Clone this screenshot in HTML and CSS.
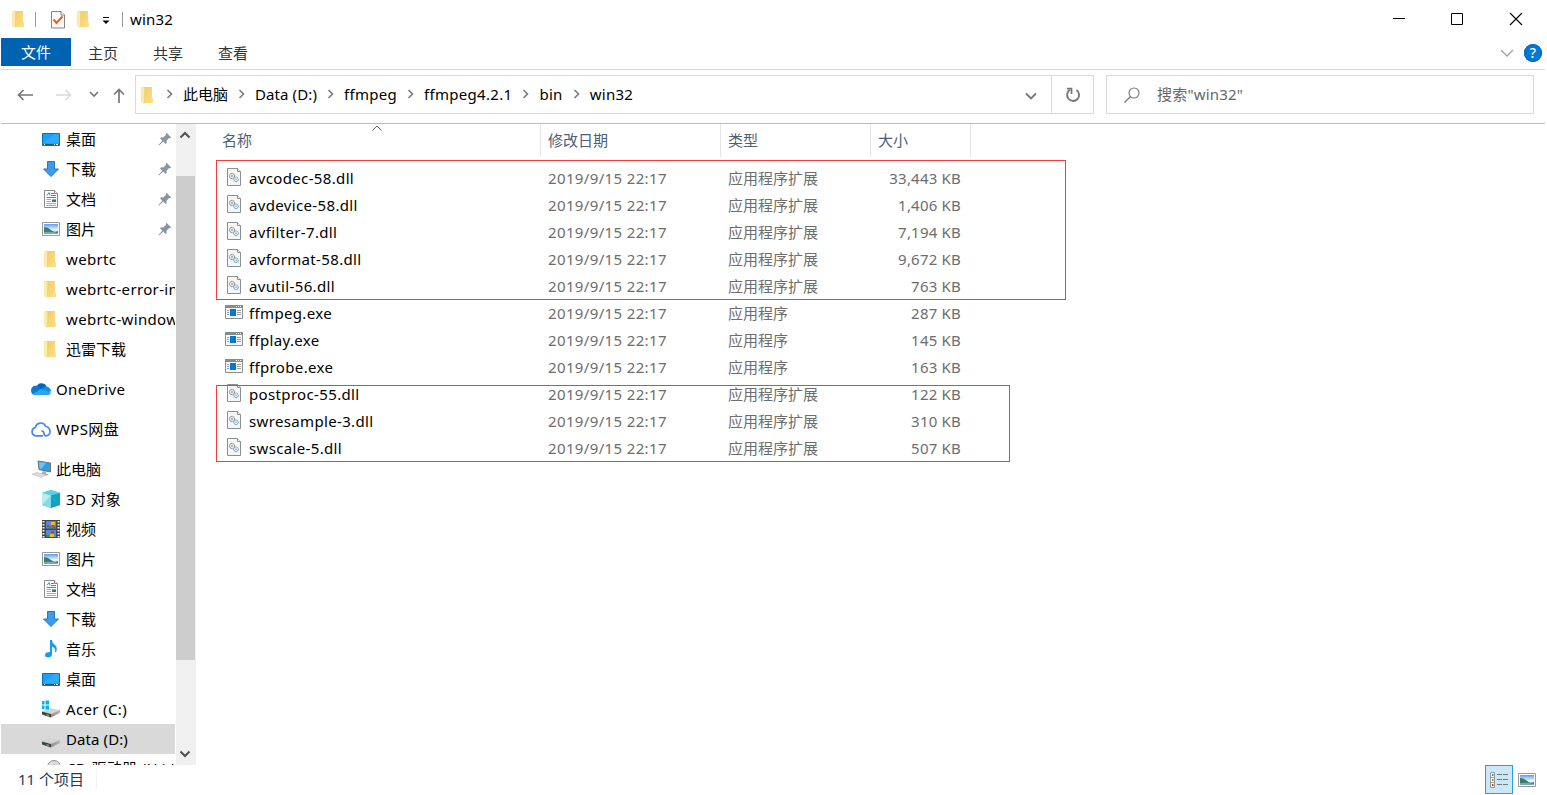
FILE: index.html
```html
<!DOCTYPE html>
<html lang="zh-CN">
<head>
    <meta charset="UTF-8">
    <meta name="viewport" content="width=device-width, initial-scale=1.0">
    <title>win32</title>
    <link rel="stylesheet" href="styles.css">
</head>
<body>
    <!-- Icon definitions -->
    <svg class="defs" width="0" height="0">
        <defs>
            <linearGradient id="g-folder" x1="0" y1="0" x2="1" y2="1">
                <stop offset="0" stop-color="#f0ca66"/>
                <stop offset="1" stop-color="#ffe08a"/>
            </linearGradient>
            <linearGradient id="g-sky" x1="0" y1="0" x2="0" y2="1">
                <stop offset="0" stop-color="#5a9cf0"/>
                <stop offset="0.55" stop-color="#e4f5fb"/>
                <stop offset="1" stop-color="#b9dcea"/>
            </linearGradient>
            <linearGradient id="g-drive" x1="0" y1="0" x2="1" y2="0">
                <stop offset="0" stop-color="#8e8e8e"/>
                <stop offset="1" stop-color="#b8b8b8"/>
            </linearGradient>
        </defs>
        <symbol id="i-folder" viewBox="0 0 18 18">
            <path d="M4 1h9v11.500h1V17H4z" fill="url(#g-folder)"/>
            <path d="M2 1h2l2 2v14l-1 1-3-2z" fill="#ffe9a6"/>
            <path d="M5.500 3v14" stroke="#f0d070" stroke-width=".8"/>
        </symbol>
        <symbol id="i-desktop" viewBox="0 0 18 18">
            <path d="M.5 3.500h17v12H.5z" fill="#18a0fb" stroke="#0b6fae"/>
            <path d="M1 13L13 4h4v9z" fill="#3cb0ff" opacity=".6"/>
            <path d="M1 14.500h16" stroke="#075c94"/>
            <path d="M2 14.500h1M12 14.500h1M14 14.500h2" stroke="#fff"/>
        </symbol>
        <symbol id="i-download" viewBox="0 0 18 18">
            <path d="M5.500 1.500h7V9h4L9 16.500 1.500 9h4z" fill="#3b9cea" stroke="#2579bd"/>
        </symbol>
        <symbol id="i-doc" viewBox="0 0 18 18">
            <path d="M2.500.5h10l3 3v14h-13z" fill="#fff" stroke="#8b8b8b"/>
            <path d="M12.500.5v3h3" fill="#eee" stroke="#8b8b8b"/>
            <path d="M5 5.500l2-3 1 3M9 3.500h3M9 5.500h5M4.500 7.500H14" stroke="#3290d2" fill="none"/>
            <path d="M4.500 9.500H9M4.500 11.500H9M4.500 13.500H14M4.500 15.500H14" stroke="#a4a8ac"/>
            <path d="M10 9h4v3h-4z" fill="#2d7a8c"/>
            <path d="M10 9h4v1h-4z" fill="#64b5ed"/>
        </symbol>
        <symbol id="i-picture" viewBox="0 0 18 18">
            <path d="M.5 2.500h17v13H.5z" fill="#fff" stroke="#999"/>
            <path d="M2 4h14v10H2z" fill="url(#g-sky)"/>
            <path d="M2 7q4 0 7 3t7 1v3H2z" fill="#397b6d"/>
            <path d="M2 12q7-1 14 1v1H2z" fill="#7ba7bd"/>
        </symbol>
        <symbol id="i-onedrive" viewBox="0 0 20 18">
            <path d="M5.500 7a5.500 5.500 0 0 1 10-1L12 12 3 9z" fill="#0364b8"/>
            <path d="M.2 11.500A4.700 4.700 0 0 1 6 5.800l9 6.200-8 3H4a4 4 0 0 1-3.800-3.500z" fill="#0a78d4"/>
            <path d="M10 9.500l3-2.500q1.500-1.500 4 0 3 1.500 3 4.500l-5 1z" fill="#1490df"/>
            <path d="M1.500 14l8.500-5 10 3.500Q19.500 15 17 15H4.500Q2.500 15 1.500 14z" fill="#28a8ea"/>
        </symbol>
        <symbol id="i-wps" viewBox="0 0 20 18">
            <path d="M11.500 15.800H5a4.200 4.200 0 0 1-.6-8.300 5.400 5.400 0 0 1 10.300-1.200c5.800 1.600 5.600 9.500.3 9.500-3.500 0-.5-4.800-4-4.800" fill="none" stroke="#4a86f0" stroke-width="1.700" stroke-linecap="round"/>
        </symbol>
        <symbol id="i-pc" viewBox="0 0 20 18">
            <path d="M7 1l12.500 2v9L8 9.500z" fill="#2e9fe6" stroke="#6d7478"/>
            <path d="M8 2l7 1-5 6-1.500-.5z" fill="#6cc5f7"/>
            <path d="M12 11l3 .6v2l3 .8-2 1-6-1.500z" fill="#a9adb0"/>
            <path d="M1 14l5-1.500L15.500 15 10 17.500z" fill="#d9dcde" stroke="#b9bdc0" stroke-width=".6"/>
        </symbol>
        <symbol id="i-cube" viewBox="0 0 18 18">
            <path d="M9 0l9 3v12l-9 3-9-3V3z" fill="#20b5cf"/>
            <path d="M0 3l9 2.500V18l-9-3z" fill="#7fdbe6"/>
            <path d="M0 3l9-3 9 3-9 2.500z" fill="#5fd0e0"/>
            <path d="M0 3l9 2.500L0 15z" fill="#b8edf1"/>
            <path d="M9 5.500L18 3v12z" fill="#0fa3c4"/>
            <path d="M9 7v11l9-3z" fill="#1292b3" opacity=".6"/>
        </symbol>
        <symbol id="i-video" viewBox="0 0 18 18">
            <path d="M0 0h18v18H0z" fill="#4a4544"/>
            <path d="M1.500 1v17M16.500 1v17" stroke="#eee" stroke-width="2" stroke-dasharray="1.500 1.500"/>
            <path d="M4 1h10v7.500H4zM4 10h10v7H4z" fill="#5488d8"/>
            <path d="M9 2h4v3H9zM8 14h4v3H8z" fill="#e8c020"/>
            <path d="M10 5h2v2h-2zM5 5h2v2H5zM9 11h3v2H9z" fill="#d2322d"/>
            <path d="M7 6.500h2v2H7zM11 7h3v1.500h-3zM4 15h3v2H4z" fill="#368c37"/>
        </symbol>
        <symbol id="i-music" viewBox="0 0 18 18">
            <path d="M8 0h2q0 3 3 5 3 2.500 1 7.500l-1-.5q1-4-3-5.500V14q0 3-3.500 3.500Q3 17.500 3 15q0-3 5-3z" fill="#149cf2"/>
        </symbol>
        <symbol id="i-drive" viewBox="0 0 18 18">
            <path d="M0 11.500L7 8l11 2L9 14z" fill="#d4d4d4"/>
            <path d="M9 14l9-4v3l-9 4.500z" fill="url(#g-drive)"/>
            <path d="M0 11.500L9 14v3.500L0 14.500z" fill="#444"/>
            <path d="M4.500 14.700l2.500.7" stroke="#5be06c"/>
        </symbol>
        <symbol id="i-drive-win" viewBox="0 0 18 18">
            <use href="#i-drive"/>
            <path d="M-1 1h3.500v3.500H-1zM3.500.5H7v4H3.500zM-1 5.500h3.500V9H-1zM3.500 5.500H7v4H3.500z" fill="#00b4f0"/>
        </symbol>
        <symbol id="i-disc" viewBox="0 0 18 18">
            <circle cx="12" cy="7" r="6.500" fill="#dcdcdc" stroke="#8f8f8f"/>
            <circle cx="12" cy="7" r="2" fill="#fff" stroke="#999"/>
        </symbol>
        <symbol id="i-pin" viewBox="0 0 14 14">
            <path d="M8.500.8l4.700 4.700-1.200.7-.8-.2L8.500 8.700l.2 2.300-1 1L5.300 9.600 1 13.500l-.6-.6 4-4.200L2 6.300l1-1 2.300.2L8 2.800l-.2-.9z" fill="#8795a1"/>
        </symbol>
        <symbol id="i-dll" viewBox="0 0 16 18">
            <path d="M1.500.5h10l3 3v14h-13z" fill="#f6f6f6" stroke="#8b8f92"/>
            <path d="M11.500.5v3h3" fill="#fff" stroke="#8b8f92"/>
            <circle cx="6" cy="8" r="2.600" fill="#fff" stroke="#6d757b" stroke-dasharray="1.400 .4"/>
            <circle cx="6" cy="8" r="1" fill="none" stroke="#7b8389" stroke-width=".7"/>
            <circle cx="10" cy="11.300" r="2.300" fill="#e6f2f9" stroke="#6295ba" stroke-dasharray="1.400 .4"/>
            <circle cx="10" cy="11.300" r=".7" fill="#6e9fc0"/>
        </symbol>
        <symbol id="i-exe" viewBox="0 0 18 14">
            <path d="M.5.5h17v13H.5z" fill="#f8f8f8" stroke="#8b9094"/>
            <path d="M0 0h18v3H0z" fill="#858c90"/>
            <path d="M11 1.500h1M13 1.500h1M15 1.500h1" stroke="#fff"/>
            <path d="M5 4h6v7H5z" fill="#0078d7"/>
            <path d="M2 5.500h2M2 7.500h2M2 9.500h2M12 5.500h4M12 7.500h4M12 9.500h4" stroke="#999fa3"/>
        </symbol>
        <symbol id="i-crumb" viewBox="0 0 8 10">
            <path d="M1.500 1l4 4-4 4" fill="none" stroke="#7a7a7a" stroke-width="1.600"/>
        </symbol>
    </svg>

    <div class="window">
        <!-- Title bar -->
        <div class="titlebar">
            <svg class="icon"><use href="#i-folder"/></svg>
            <span class="divider"></span>
            <svg class="props" width="16" height="19" viewBox="0 0 16 19">
                <path d="M1.500 1.500h9.500l3.500 3.500v13h-13z" fill="#fafafa" stroke="#858585"/>
                <path d="M11 1.500V5h3.500" fill="#fff" stroke="#858585"/>
                <path d="M3.500 9.500l3 3.500 6-6.500" fill="none" stroke="#ee5a24" stroke-width="2"/>
            </svg>
            <svg class="icon"><use href="#i-folder"/></svg>
            <svg class="customize" width="8" height="8" viewBox="0 0 8 8">
                <path d="M1 .5h6" stroke="#000"/>
                <path d="M.5 3.500h7L4 7z" fill="#000"/>
            </svg>
            <span class="divider"></span>
            <span class="title">win32</span>
            <div class="controls">
                <svg width="14" height="14" viewBox="0 0 14 14"><path d="M1 6.500h12" stroke="#000"/></svg>
                <svg width="14" height="14" viewBox="0 0 14 14"><path d="M1.500 1.500h11v11h-11z" fill="none" stroke="#000"/></svg>
                <svg class="close" width="14" height="14" viewBox="0 0 14 14"><path d="M1 1l12 12M13 1L1 13" stroke="#000" stroke-width="1.100"/></svg>
            </div>
        </div>

        <!-- Ribbon tabs -->
        <div class="tabs">
            <span class="tab active">文件</span>
            <span class="tab">主页</span>
            <span class="tab">共享</span>
            <span class="tab">查看</span>
            <svg class="expand" width="14" height="8" viewBox="0 0 14 8"><path d="M1 1l6 6 6-6" fill="none" stroke="#a0a0a0" stroke-width="1.300"/></svg>
            <span class="help">?</span>
        </div>

        <!-- Navigation -->
        <div class="nav">
            <div class="nav-buttons">
                <svg width="16" height="12" viewBox="0 0 16 12"><path d="M16 6H1.500M6.500 1l-5 5 5 5" fill="none" stroke="#777" stroke-width="1.700"/></svg>
                <svg class="forward" width="16" height="12" viewBox="0 0 16 12"><path d="M0 6h14.500M9.500 1l5 5-5 5" fill="none" stroke="#d9d9d9" stroke-width="1.500"/></svg>
                <svg class="recent" width="10" height="7" viewBox="0 0 10 7"><path d="M1 1l4 4 4-4" fill="none" stroke="#777" stroke-width="1.600"/></svg>
                <svg class="up" width="12" height="15" viewBox="0 0 12 15"><path d="M6 15V1.500M1 6.500l5-5 5 5" fill="none" stroke="#777" stroke-width="1.700"/></svg>
            </div>
            <div class="address">
                <svg class="icon"><use href="#i-folder"/></svg>
                <svg class="crumb-sep first"><use href="#i-crumb"/></svg>
                <span class="cjk">此电脑</span>
                <svg class="crumb-sep"><use href="#i-crumb"/></svg>
                <span class="drive">Data (D:)</span>
                <svg class="crumb-sep"><use href="#i-crumb"/></svg>
                <span>ffmpeg</span>
                <svg class="crumb-sep"><use href="#i-crumb"/></svg>
                <span>ffmpeg4.2.1</span>
                <svg class="crumb-sep"><use href="#i-crumb"/></svg>
                <span>bin</span>
                <svg class="crumb-sep"><use href="#i-crumb"/></svg>
                <span>win32</span>
                <svg class="history" width="12" height="8" viewBox="0 0 12 8"><path d="M1 1.500l5 5 5-5" fill="none" stroke="#777" stroke-width="1.900"/></svg>
                <div class="refresh">
                    <svg width="16" height="16" viewBox="0 0 16 16">
                        <path d="M5 2.800A6 6 0 1 0 11.500 3" fill="none" stroke="#777" stroke-width="1.900"/>
                        <path d="M2 1.700h4.500V7" fill="none" stroke="#777" stroke-width="1.700"/>
                    </svg>
                </div>
            </div>
            <div class="search">
                <svg width="16" height="16" viewBox="0 0 16 16">
                    <circle cx="10" cy="6" r="5" fill="none" stroke="#777" stroke-width="1.100"/>
                    <path d="M6.500 9.500L.5 15.500" stroke="#777" stroke-width="1.200"/>
                </svg>
                <span>搜索"win32"</span>
            </div>
        </div>

        <div class="main">
            <!-- Navigation pane -->
            <div class="sidebar">
                <div class="item"><svg class="icon"><use href="#i-desktop"/></svg><span class="cjk">桌面</span><svg class="pin"><use href="#i-pin"/></svg></div>
                <div class="item"><svg class="icon"><use href="#i-download"/></svg><span class="cjk">下载</span><svg class="pin"><use href="#i-pin"/></svg></div>
                <div class="item"><svg class="icon"><use href="#i-doc"/></svg><span class="cjk">文档</span><svg class="pin"><use href="#i-pin"/></svg></div>
                <div class="item"><svg class="icon"><use href="#i-picture"/></svg><span class="cjk">图片</span><svg class="pin"><use href="#i-pin"/></svg></div>
                <div class="item"><svg class="icon"><use href="#i-folder"/></svg><span>webrtc</span></div>
                <div class="item"><svg class="icon"><use href="#i-folder"/></svg><span>webrtc-error-info</span></div>
                <div class="item"><svg class="icon"><use href="#i-folder"/></svg><span>webrtc-windows</span></div>
                <div class="item"><svg class="icon"><use href="#i-folder"/></svg><span class="cjk">迅雷下载</span></div>
                <div class="item root"><svg class="icon"><use href="#i-onedrive"/></svg><span>OneDrive</span></div>
                <div class="item root"><svg class="icon"><use href="#i-wps"/></svg><span>WPS网盘</span></div>
                <div class="item root"><svg class="icon"><use href="#i-pc"/></svg><span class="cjk">此电脑</span></div>
                <div class="item"><svg class="icon"><use href="#i-cube"/></svg><span>3D 对象</span></div>
                <div class="item"><svg class="icon"><use href="#i-video"/></svg><span class="cjk">视频</span></div>
                <div class="item"><svg class="icon"><use href="#i-picture"/></svg><span class="cjk">图片</span></div>
                <div class="item"><svg class="icon"><use href="#i-doc"/></svg><span class="cjk">文档</span></div>
                <div class="item"><svg class="icon"><use href="#i-download"/></svg><span class="cjk">下载</span></div>
                <div class="item"><svg class="icon"><use href="#i-music"/></svg><span class="cjk">音乐</span></div>
                <div class="item"><svg class="icon"><use href="#i-desktop"/></svg><span class="cjk">桌面</span></div>
                <div class="item"><svg class="icon"><use href="#i-drive-win"/></svg><span>Acer (C:)</span></div>
                <div class="item selected"><svg class="icon"><use href="#i-drive"/></svg><span>Data (D:)</span></div>
                <div class="item last"><svg class="icon"><use href="#i-disc"/></svg><span>CD 驱动器 (H:) W</span></div>
            </div>
            <div class="scrollbar">
                <svg width="12" height="8" viewBox="0 0 12 8"><path d="M1.500 6.500L6 2l4.500 4.500" fill="none" stroke="#505050" stroke-width="2"/></svg>
                <div class="thumb"></div>
                <svg width="12" height="8" viewBox="0 0 12 8"><path d="M1.500 1.500L6 6l4.500-4.500" fill="none" stroke="#505050" stroke-width="2"/></svg>
            </div>

            <!-- File list -->
            <div class="files">
                <div class="header">
                    <span class="name">名称</span>
                    <span>修改日期</span>
                    <span>类型</span>
                    <span>大小</span>
                    <svg class="sort" width="10" height="6" viewBox="0 0 10 6"><path d="M.5 5.500L5 1l4.500 4.500" fill="none" stroke="#666"/></svg>
                </div>
                <div class="row"><svg class="dll"><use href="#i-dll"/></svg><span class="name">avcodec-58.dll</span><span class="date">2019/9/15 22:17</span><span>应用程序扩展</span><span class="size">33,443 KB</span></div>
                <div class="row"><svg class="dll"><use href="#i-dll"/></svg><span class="name">avdevice-58.dll</span><span class="date">2019/9/15 22:17</span><span>应用程序扩展</span><span class="size">1,406 KB</span></div>
                <div class="row"><svg class="dll"><use href="#i-dll"/></svg><span class="name">avfilter-7.dll</span><span class="date">2019/9/15 22:17</span><span>应用程序扩展</span><span class="size">7,194 KB</span></div>
                <div class="row"><svg class="dll"><use href="#i-dll"/></svg><span class="name">avformat-58.dll</span><span class="date">2019/9/15 22:17</span><span>应用程序扩展</span><span class="size">9,672 KB</span></div>
                <div class="row"><svg class="dll"><use href="#i-dll"/></svg><span class="name">avutil-56.dll</span><span class="date">2019/9/15 22:17</span><span>应用程序扩展</span><span class="size">763 KB</span></div>
                <div class="row"><svg class="exe"><use href="#i-exe"/></svg><span class="name">ffmpeg.exe</span><span class="date">2019/9/15 22:17</span><span>应用程序</span><span class="size">287 KB</span></div>
                <div class="row"><svg class="exe"><use href="#i-exe"/></svg><span class="name">ffplay.exe</span><span class="date">2019/9/15 22:17</span><span>应用程序</span><span class="size">145 KB</span></div>
                <div class="row"><svg class="exe"><use href="#i-exe"/></svg><span class="name">ffprobe.exe</span><span class="date">2019/9/15 22:17</span><span>应用程序</span><span class="size">163 KB</span></div>
                <div class="row"><svg class="dll"><use href="#i-dll"/></svg><span class="name">postproc-55.dll</span><span class="date">2019/9/15 22:17</span><span>应用程序扩展</span><span class="size">122 KB</span></div>
                <div class="row"><svg class="dll"><use href="#i-dll"/></svg><span class="name">swresample-3.dll</span><span class="date">2019/9/15 22:17</span><span>应用程序扩展</span><span class="size">310 KB</span></div>
                <div class="row"><svg class="dll"><use href="#i-dll"/></svg><span class="name">swscale-5.dll</span><span class="date">2019/9/15 22:17</span><span>应用程序扩展</span><span class="size">507 KB</span></div>
                <!-- Red highlight boxes over the dll files -->
                <div class="mark mark-top"></div>
                <div class="mark mark-bottom"></div>
            </div>
        </div>

        <!-- Status bar -->
        <div class="status">
            <span class="count">11 个项目</span>
            <div class="view active">
                <svg width="20" height="18" viewBox="0 0 20 18">
                    <path d="M1.500 1.500h4v15h-4zM1.500 6.500h4M1.500 11.500h4" fill="#fff" stroke="#999"/>
                    <path d="M3 4h1.500" stroke="#2f86bd" stroke-width="2"/>
                    <path d="M3 9h1.500" stroke="#8a8a20" stroke-width="2"/>
                    <path d="M3 14h1.500" stroke="#d03a20" stroke-width="2"/>
                    <path d="M8 3.500h5M14 3.500h5M8 8.500h5M14 8.500h5M8 13.500h5M14 13.500h5" stroke="#777"/>
                </svg>
            </div>
            <div class="view"><svg class="icon"><use href="#i-picture"/></svg></div>
        </div>
    </div>
</body>
</html>
```
FILE: styles.css
```css
*, *::before, *::after {
    box-sizing: border-box;
    margin: 0;
    padding: 0;
}

body {
    font-family: "Noto Sans", "Noto Sans CJK SC", sans-serif;
    font-size: 15px;
    line-height: 20px;
    background-color: #fff;
    color: #000;
    overflow: hidden;
}

svg {
    display: block;
    flex-shrink: 0;
}

span {
    white-space: nowrap;
}

.defs {
    position: absolute;
}

.window {
    width: 1547px;
    height: 795px;
    padding: 0 2px 0 1px;
    display: flex;
    flex-direction: column;
}

.icon {
    width: 18px;
    height: 18px;
    overflow: visible;
}

/* Title bar */
.titlebar {
    height: 38px;
    padding-left: 9px;
    display: flex;
    align-items: center;
}

.divider {
    width: 1px;
    height: 15px;
    background-color: #999;
}

.titlebar .icon + .divider {
    margin-left: 7px;
}

.props {
    margin: 0 9px 0 14px;
}

.customize {
    margin: 3px 12px 0 9px;
}

.title {
    margin-left: 7px;
    letter-spacing: 0.2px;
}

.controls {
    display: flex;
    gap: 44px;
    margin-left: auto;
    margin-right: 22px;
}

.close {
    margin-left: 1px;
}

/* Ribbon tabs */
.tabs {
    height: 32px;
    display: flex;
    border-bottom: 1px solid #dadada;
    color: #333;
}

.tab {
    width: 65px;
    padding: 5px 1px 0 0;
    text-align: center;
}

.tab.active {
    width: 70px;
    height: 28px;
    padding: 4px 0 0;
    background-color: #0063b1;
    color: #fff;
}

.expand {
    margin: 11px 10px 0 auto;
}

.help {
    width: 18px;
    height: 18px;
    margin: 6px 3px 0 0;
    border-radius: 50%;
    background-color: #0078d7;
    box-shadow: inset 0 0 0 1px #0a65ad;
    color: #fff;
    font-size: 14px;
    font-weight: 500;
    line-height: 18px;
    text-align: center;
}

/* Navigation */
.nav {
    height: 54px;
    display: flex;
    align-items: center;
    border-bottom: 1px solid #bcbcbc;
    padding: 0 11px 4px 0;
}

.nav-buttons {
    width: 134px;
    padding-left: 16px;
    display: flex;
    align-items: center;
}

.forward {
    margin-left: 23px;
}

.recent {
    margin-left: 17px;
}

.up {
    margin: 2px 0 0 14px;
}

.address, .search {
    height: 39px;
    display: flex;
    align-items: center;
    border: 1px solid #d9d9d9;
}

.address {
    width: 959px;
    padding-left: 3px;
}

.address span {
    letter-spacing: 0.3px;
}

.address span, .search span {
    padding-bottom: 2px;
}

.address .cjk {
    letter-spacing: 0;
}

.address .drive {
    letter-spacing: 0.1px;
}

.crumb-sep {
    width: 8px;
    height: 10px;
    margin: 0 9px 2px 10px;
}

.crumb-sep.first {
    margin-left: 9px;
}

.history {
    margin: 2px 14px 0 auto;
}

.refresh {
    width: 42px;
    height: 37px;
    display: flex;
    align-items: center;
    justify-content: center;
    border-left: 1px solid #d9d9d9;
}

.search {
    width: 428px;
    margin-left: 12px;
    padding-left: 17px;
    gap: 17px;
    color: #666;
    letter-spacing: 0.2px;
}

.main {
    height: 641px;
    display: flex;
}

/* Navigation pane */
.sidebar {
    width: 174px;
    overflow: hidden;
}

.item {
    height: 30px;
    padding: 0 3px 0 41px;
    display: flex;
    align-items: center;
    gap: 6px;
}

.item span {
    flex-shrink: 0;
    letter-spacing: 0.35px;
}

.item .cjk {
    letter-spacing: 0;
}

.item.root {
    margin-top: 10px;
    padding-left: 30px;
    gap: 5px;
}

.item.root .icon {
    width: 20px;
}

.item.selected {
    background-color: #d9d9d9;
}

.item.selected span {
    letter-spacing: 0.1px;
}

.item.last span {
    margin-bottom: 3px;
}

.pin {
    width: 14px;
    height: 14px;
    margin-left: auto;
}

.scrollbar {
    width: 20px;
    margin-left: 1px;
    padding: 7px 1px 7px 0;
    display: flex;
    flex-direction: column;
    align-items: center;
    background-color: #f0f0f0;
}

.scrollbar svg {
    margin-right: 1px;
}

.thumb {
    width: 19px;
    height: 484px;
    margin: 37px 0 auto;
    background-color: #cdcdcd;
}

/* File list */
.files {
    position: relative;
    flex: 1;
    padding-left: 18px;
}

.header {
    position: relative;
    height: 33px;
    margin-bottom: 8px;
    display: grid;
    grid-template-columns: 327px 180px 150px 100px;
    color: #4c607a;
}

.header span {
    padding: 6px 0 0 7px;
    border-right: 1px solid #e5e5e5;
}

.header .name {
    padding-left: 8px;
}

.sort {
    position: absolute;
    left: 158px;
    top: 1px;
}

.row {
    height: 27px;
    padding-left: 10px;
    display: grid;
    grid-template-columns: 25px 299px 180px 150px 83px;
    align-items: center;
    color: #6d6d6d;
}

.row span {
    padding-bottom: 2px;
}

.row .name {
    color: #000;
    letter-spacing: 0.35px;
}

.row .date {
    letter-spacing: 0.36px;
}

.row .size {
    text-align: right;
    letter-spacing: 0.2px;
}

.dll {
    width: 16px;
    height: 18px;
    margin: 0 0 3px 2px;
}

.exe {
    width: 18px;
    height: 14px;
    margin: 0 0 3px 1px;
}

.mark {
    position: absolute;
    left: 20px;
    border: 1px solid #f43c3c;
}

.mark-top {
    top: 36px;
    width: 850px;
    height: 140px;
}

.mark-bottom {
    top: 261px;
    width: 794px;
    height: 77px;
}

/* Status bar */
.status {
    height: 30px;
    display: flex;
    padding-right: 4px;
    color: #1e395b;
}

.count {
    height: 20px;
    margin: 4px auto 0 17px;
    padding-right: 12px;
    border-right: 1px solid #f2f2f2;
}

.view {
    width: 28px;
    height: 29px;
    display: flex;
    align-items: center;
    justify-content: center;
}

.view.active {
    border: 1px solid #26a0da;
    background-color: #cce8f7;
}
```
